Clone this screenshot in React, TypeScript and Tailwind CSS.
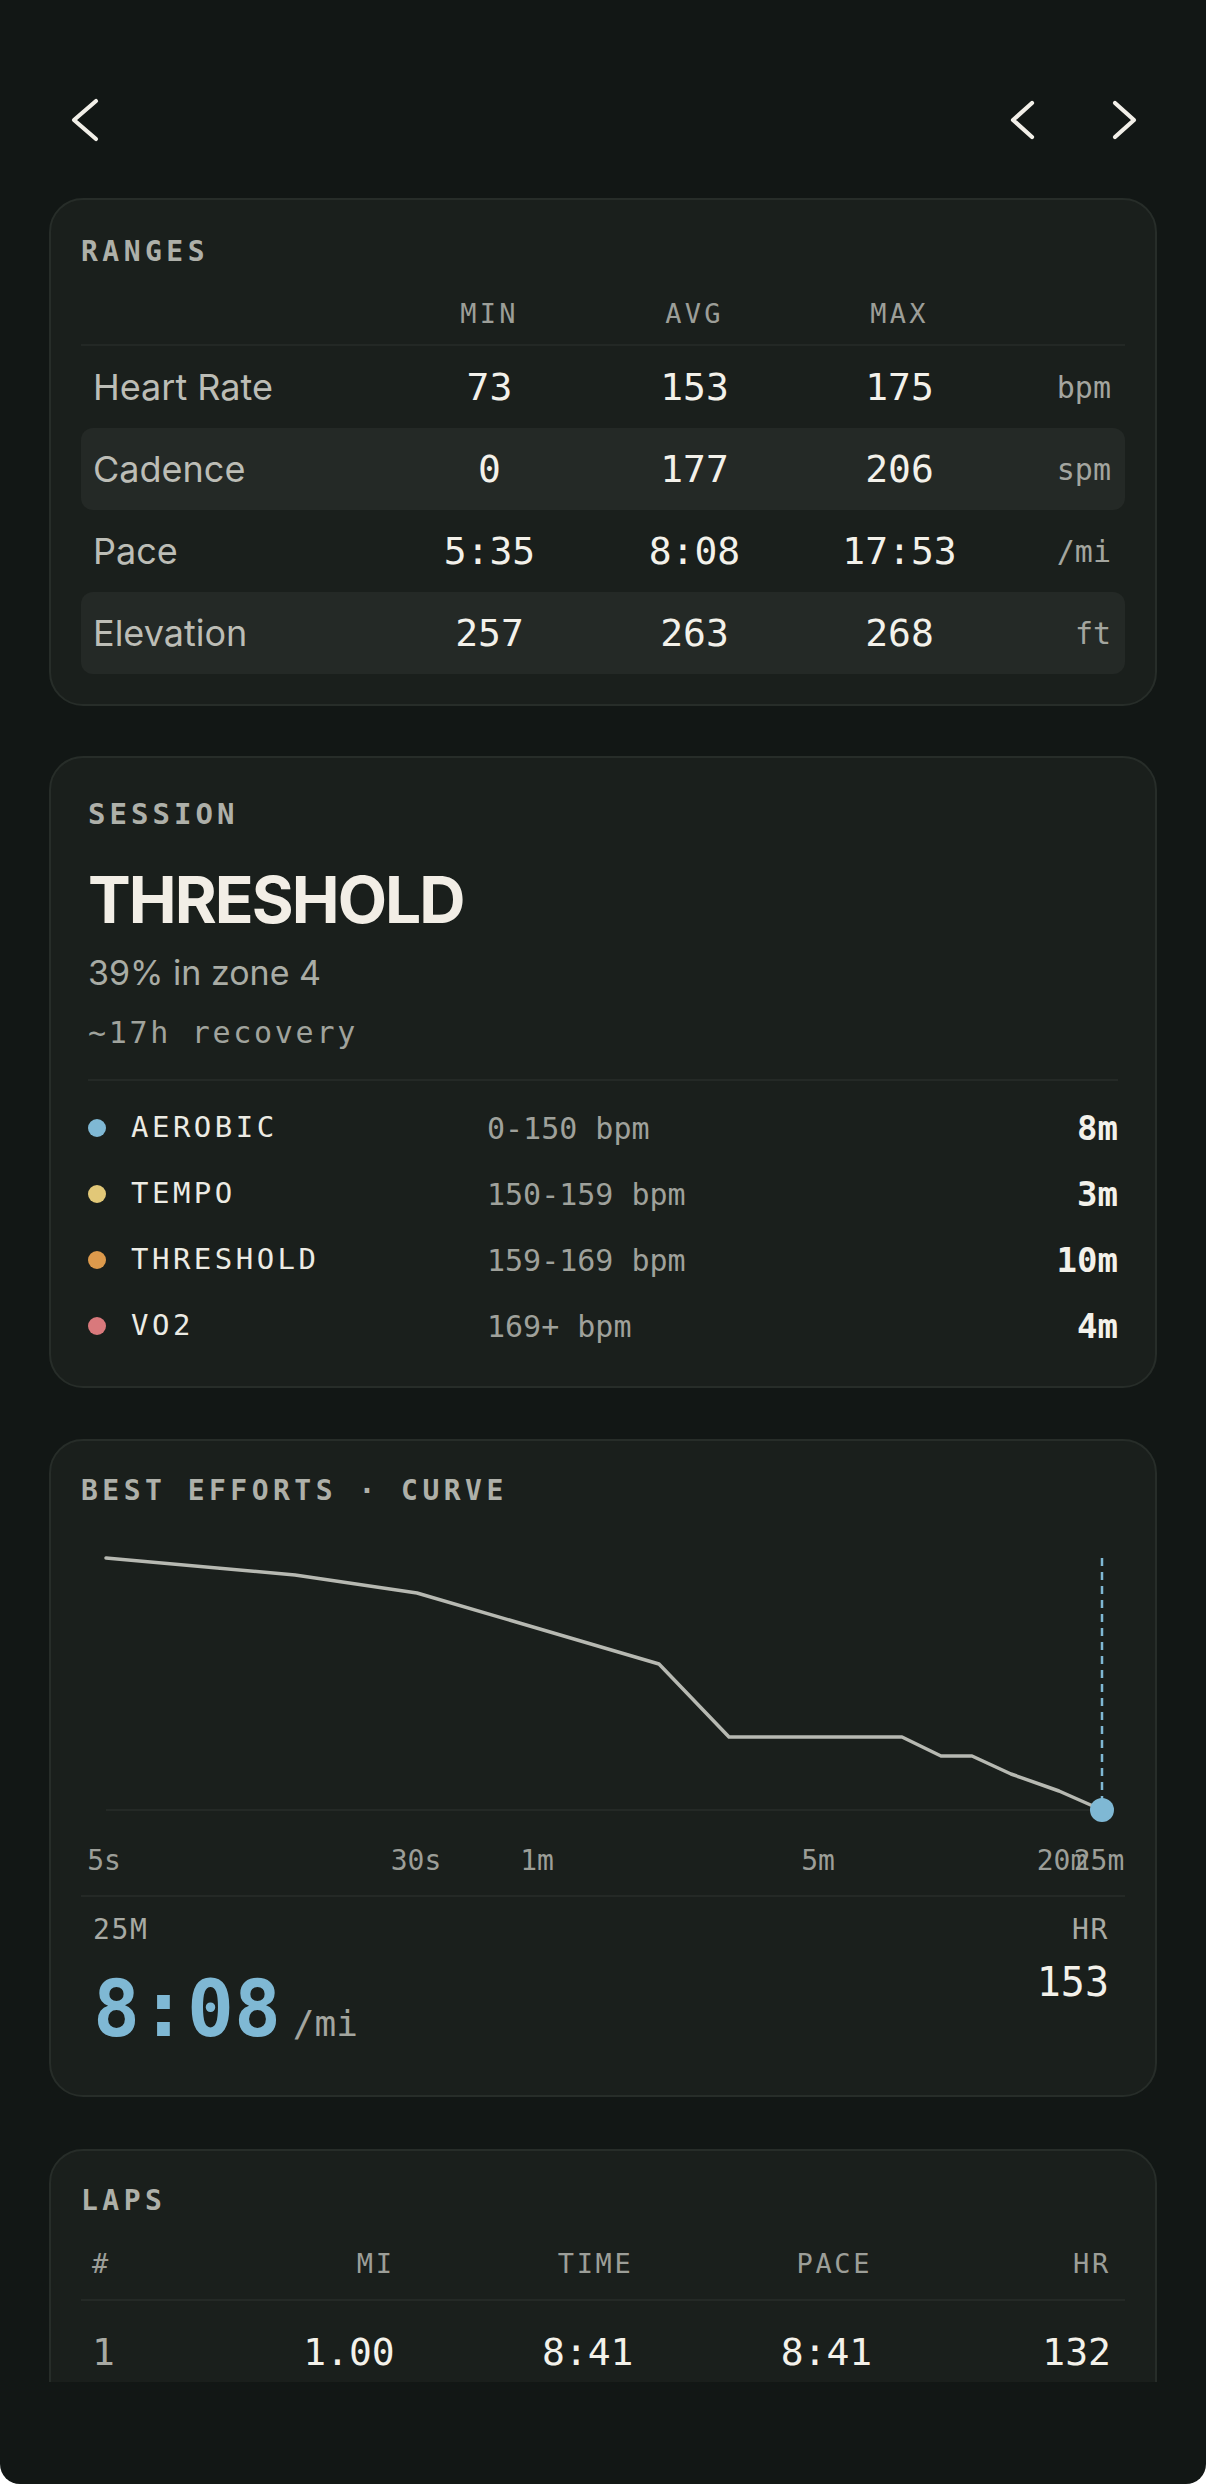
import React from 'react';

const mono = "font-['DejaVu_Sans_Mono',monospace]";
const sans = "font-['Inter',sans-serif]";

const ranges = [
  { label: 'Heart Rate', min: '73', avg: '153', max: '175', unit: 'bpm' },
  { label: 'Cadence', min: '0', avg: '177', max: '206', unit: 'spm' },
  { label: 'Pace', min: '5:35', avg: '8:08', max: '17:53', unit: '/mi' },
  { label: 'Elevation', min: '257', avg: '263', max: '268', unit: 'ft' },
];

const zones = [
  { name: 'AEROBIC', color: 'bg-[#7fb8d4]', range: '0-150 bpm', time: '8m' },
  { name: 'TEMPO', color: 'bg-[#e2c878]', range: '150-159 bpm', time: '3m' },
  { name: 'THRESHOLD', color: 'bg-[#dd9a4c]', range: '159-169 bpm', time: '10m' },
  { name: 'VO2', color: 'bg-[#d9797c]', range: '169+ bpm', time: '4m' },
];

const laps = [{ n: '1', mi: '1.00', time: '8:41', pace: '8:41', hr: '132' }];

// best-effort curve, local chart coords
const curve: [number, number][] = [
  [25, 28], [214, 45], [336, 63], [578, 134], [648, 207], [821, 207],
  [860, 226], [891, 226], [930, 244], [978, 261], [1021, 280],
];

const ticks = [
  { t: '5s', x: 23 }, { t: '30s', x: 335 }, { t: '1m', x: 456 },
  { t: '5m', x: 737 }, { t: '20m', x: 981 }, { t: '25m', x: 1018 },
];

const Chevron: React.FC<{ dir: 'left' | 'right'; narrow?: boolean }> = ({ dir, narrow }) => {
  const pts =
    dir === 'left'
      ? narrow ? '26,7 7,24 26,41' : '28,5 6,24 28,43'
      : '7,7 26,24 7,41';
  return (
    <svg width="32" height="48" viewBox="0 0 32 48" fill="none">
      <polyline points={pts} stroke="#f1efe8" strokeWidth="4.2" strokeLinecap="round" strokeLinejoin="round" />
    </svg>
  );
};

const Card: React.FC<{ className?: string; children: React.ReactNode }> = ({ className, children }) => (
  <div className={`mx-[49px] rounded-[34px] border-2 border-[#272d29] bg-[#1a1f1c] ${className ?? ''}`}>{children}</div>
);

const App: React.FC = () => {
  return (
    <div className="w-full h-[2484px] bg-white">
      <div className="h-full bg-[#121715] rounded-b-[20px] overflow-hidden flex flex-col">
        {/* top bar */}
        <div className="h-[170px] shrink-0 flex justify-between items-start pt-[96px] pl-[68px] pr-[66px]">
          <Chevron dir="left" />
          <div className="flex gap-[70px]">
            <Chevron dir="left" narrow />
            <Chevron dir="right" />
          </div>
        </div>

        <div className="h-[2212px] shrink-0 overflow-hidden pt-[28px]">
          {/* ranges */}
          <Card className="px-[30px] pt-[35px] pb-[30px]">
            <div className={`${mono} text-[28px] leading-[34px] font-bold tracking-[0.16em] text-[#aeb0a9]`}>RANGES</div>
            <div className={`${mono} mt-[28px] pb-[13px] border-b-2 border-[#232825] grid grid-cols-[294px_205px_205px_205px_1fr] px-[12px] text-[27px] leading-[34px] tracking-[0.12em] text-[#9c9e98]`}>
              <div />
              <div className="text-center">MIN</div>
              <div className="text-center">AVG</div>
              <div className="text-center">MAX</div>
              <div />
            </div>
            {ranges.map((r, i) => (
              <div
                key={r.label}
                className={`h-[82px] grid grid-cols-[294px_205px_205px_205px_1fr] items-center px-[12px] rounded-[12px] ${i % 2 === 1 ? 'bg-[#242926]' : ''}`}
              >
                <div className={`${sans} text-[36px] text-[#bcbdb6]`}>{r.label}</div>
                <div className={`${mono} text-[38px] text-center text-[#f3f1ea]`}>{r.min}</div>
                <div className={`${mono} text-[38px] text-center text-[#f3f1ea]`}>{r.avg}</div>
                <div className={`${mono} text-[38px] text-center text-[#f3f1ea]`}>{r.max}</div>
                <div className={`${mono} text-[30px] text-right text-[#a3a59f] pr-[2px]`}>{r.unit}</div>
              </div>
            ))}
          </Card>

          {/* session */}
          <Card className="mt-[50px] px-[37px] pt-[39px] pb-[27px]">
            <div className={`${mono} text-[29px] leading-[34px] font-bold tracking-[0.14em] text-[#aeb0a9]`}>SESSION</div>
            <div className={`${sans} mt-[37px] text-[64px] leading-[64px] font-bold tracking-[-0.03em] text-[#f2eee6]`}>THRESHOLD</div>
            <div className={`${sans} mt-[21px] text-[34px] leading-[40px] text-[#a9aca5]`}>39% in zone 4</div>
            <div className={`${mono} mt-[22px] text-[30px] leading-[36px] tracking-[0.09em] text-[#a0a39d]`}>~17h recovery</div>
            <div className="mt-[28px] border-t-2 border-[#242926] pt-[14px]">
              {zones.map((z) => (
                <div key={z.name} className="h-[66px] grid grid-cols-[43px_356px_1fr_auto] items-center">
                  <span className={`w-[18px] h-[18px] rounded-full ${z.color}`} />
                  <span className={`${mono} text-[29px] tracking-[0.12em] text-[#ecebe4]`}>{z.name}</span>
                  <span className={`${mono} text-[30px] text-[#9fa19b]`}>{z.range}</span>
                  <span className={`${mono} text-[34px] font-bold text-[#f3f1ea]`}>{z.time}</span>
                </div>
              ))}
            </div>
          </Card>

          {/* best efforts */}
          <Card className="mt-[51px] px-[30px] pt-[33px] pb-[47px]">
            <div className={`${mono} text-[28px] leading-[34px] font-bold tracking-[0.16em] text-[#aeb0a9]`}>BEST EFFORTS · CURVE</div>
            <svg className="mt-[22px] block" width="1044" height="350" viewBox="0 0 1044 350">
              <line x1="25" y1="280" x2="1021" y2="280" stroke="#242926" strokeWidth="2" />
              <line x1="1021" y1="28" x2="1021" y2="280" stroke="#7fb8d4" strokeWidth="2.5" strokeDasharray="8 6" />
              <polyline
                points={curve.map((p) => p.join(',')).join(' ')}
                fill="none"
                stroke="#b7b9b2"
                strokeWidth="3.5"
                strokeLinejoin="round"
                strokeLinecap="round"
              />
              <circle cx="1021" cy="280" r="12" fill="#7fb8d4" />
              {ticks.map((t) => (
                <text
                  key={t.t}
                  x={t.x}
                  y="340"
                  textAnchor="middle"
                  fontSize="28"
                  fill="#9c9e98"
                  fontFamily="DejaVu Sans Mono, monospace"
                >
                  {t.t}
                </text>
              ))}
            </svg>
            <div className="mt-[15px] border-t-2 border-[#242926] pt-[16px] pl-[12px] pr-[16px] flex justify-between items-start">
              <div className="flex flex-col">
                <div className={`${mono} text-[28px] leading-[34px] tracking-[0.06em] text-[#a8aaa4]`}>25M</div>
                <div className="mt-[23px] flex items-baseline">
                  <span className={`${mono} text-[78px] leading-[78px] font-bold text-[#7fb8d4]`}>8:08</span>
                  <span className={`${mono} ml-[12px] text-[36px] leading-none text-[#a3a59f]`}>/mi</span>
                </div>
              </div>
              <div className="flex flex-col items-end">
                <div className={`${mono} text-[28px] leading-[34px] tracking-[0.06em] text-[#a8aaa4]`}>HR</div>
                <div className={`${mono} mt-[13px] text-[40px] leading-[44px] text-[#f3f1ea]`}>153</div>
              </div>
            </div>
          </Card>

          {/* laps */}
          <Card className="mt-[52px] px-[30px] pt-[33px] pb-[30px]">
            <div className={`${mono} text-[28px] leading-[34px] font-bold tracking-[0.16em] text-[#aeb0a9]`}>LAPS</div>
            <div className={`${mono} mt-[29px] pb-[18px] border-b-2 border-[#242926] grid grid-cols-[64px_1fr_1fr_1fr_1fr] pl-[11px] pr-[14px] text-[27px] leading-[34px] tracking-[0.1em] text-[#9c9e98]`}>
              <div>#</div>
              <div className="text-right">MI</div>
              <div className="text-right">TIME</div>
              <div className="text-right">PACE</div>
              <div className="text-right">HR</div>
            </div>
            {laps.map((l) => (
              <div key={l.n} className={`${mono} grid grid-cols-[64px_1fr_1fr_1fr_1fr] pl-[11px] pr-[14px] pt-[29px] pb-[10px] text-[38px] leading-[44px] text-[#f3f1ea]`}>
                <div className="text-[#a8aaa4]">{l.n}</div>
                <div className="text-right">{l.mi}</div>
                <div className="text-right">{l.time}</div>
                <div className="text-right">{l.pace}</div>
                <div className="text-right">{l.hr}</div>
              </div>
            ))}
          </Card>
        </div>
      </div>
    </div>
  );
};

export default App;
